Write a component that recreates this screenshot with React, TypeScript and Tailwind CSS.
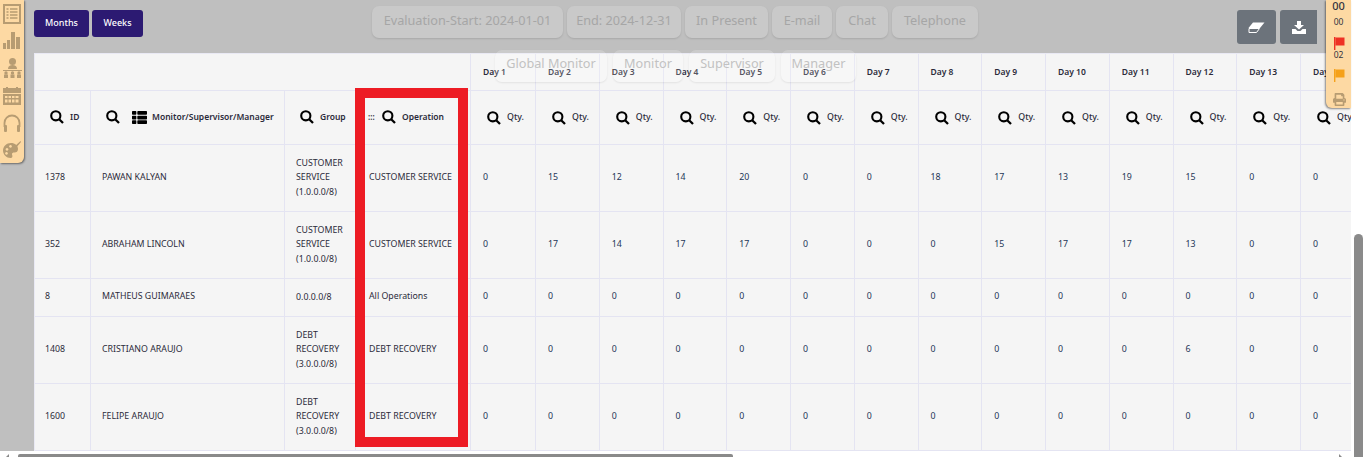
import { FaPrint, FaThList } from "react-icons/fa";

const rows = [
  { id: "1378", name: "PAWAN KALYAN", group: ["CUSTOMER", "SERVICE", "(1.0.0.0/8)"], op: "CUSTOMER SERVICE", q: [0, 15, 12, 14, 20, 0, 0, 18, 17, 13, 19, 15, 0, 0] },
  { id: "352", name: "ABRAHAM LINCOLN", group: ["CUSTOMER", "SERVICE", "(1.0.0.0/8)"], op: "CUSTOMER SERVICE", q: [0, 17, 14, 17, 17, 0, 0, 0, 15, 17, 17, 13, 0, 0] },
  { id: "8", name: "MATHEUS GUIMARAES", group: ["0.0.0.0/8"], op: "All Operations", q: [0, 0, 0, 0, 0, 0, 0, 0, 0, 0, 0, 0, 0, 0] },
  { id: "1408", name: "CRISTIANO ARAUJO", group: ["DEBT", "RECOVERY", "(3.0.0.0/8)"], op: "DEBT RECOVERY", q: [0, 0, 0, 0, 0, 0, 0, 0, 0, 0, 0, 6, 0, 0] },
  { id: "1600", name: "FELIPE ARAUJO", group: ["DEBT", "RECOVERY", "(3.0.0.0/8)"], op: "DEBT RECOVERY", q: [0, 0, 0, 0, 0, 0, 0, 0, 0, 0, 0, 0, 0, 0] },
];
const days = Array.from({ length: 14 }, (_, i) => i + 1);
const cell = "border-r border-b border-[#e4e4f2] flex items-center min-w-0";

function Search() {
  return (
    <svg width="14" height="14" viewBox="0 0 14 14" fill="none" stroke="#000" className="shrink-0">
      <circle cx="5.8" cy="5.8" r="4.6" strokeWidth="2.1" />
      <path d="M9.2 9.2 L13 13" strokeWidth="2.3" />
    </svg>
  );
}
function Flag({ color, className }: { color: string; className: string }) {
  return (
    <svg width="11" height="13" viewBox="0 0 11 13" className={className}>
      <rect x="0" y="0" width="1.4" height="13" fill={color} />
      <path d="M1.4 0.5 H10.5 V8.5 H1.4 Z" fill={color} />
    </svg>
  );
}
function Ghost({ label, w }: { label: string; w: string }) {
  return <div className={`${w} h-[32px] pb-[3px] flex items-center justify-center rounded-[7px] bg-[#c9c9c9] shadow-[0_1px_2px_rgba(0,0,0,0.12)] text-[12.7px] text-[#a6a6a6] whitespace-nowrap`}>{label}</div>;
}
function Ghost2({ label, w }: { label: string; w: string }) {
  return <div className={`${w} h-[32px] pb-[5px] flex items-center justify-center rounded-[7px] bg-white/20 shadow-[0_1px_2px_rgba(0,0,0,0.08)] text-[12.7px] text-[#c2c2c2] whitespace-nowrap`}>{label}</div>;
}

export default function App() {
  return (
    <div className="w-[1366px] h-[457px] overflow-hidden flex bg-white font-['Noto_Sans','Open_Sans',sans-serif] text-[#2b2b3a]">
      <div className="relative w-[1354px] flex flex-col shrink-0">
        <div className="h-[53px] w-[1351px] bg-[#bfbfbf] flex shrink-0 items-start pl-[34px]">
          <div className="flex gap-[3px] pt-[10px]">
            <button className="w-[55px] h-[27px] rounded-[3px] bg-[#2c1a72] text-white text-[9px] font-medium pb-[1px]">Months</button>
            <button className="w-[51px] h-[27px] rounded-[3px] bg-[#2c1a72] text-white text-[9px] font-medium pb-[1px]">Weeks</button>
          </div>
          <div className="flex gap-[4px] pt-[6px] ml-[229px]">
            <Ghost label="Evaluation-Start: 2024-01-01" w="w-[191px]" />
            <Ghost label="End: 2024-12-31" w="w-[114px]" />
            <Ghost label="In Present" w="w-[83px]" />
            <Ghost label="E-mail" w="w-[60px]" />
            <Ghost label="Chat" w="w-[52px]" />
            <Ghost label="Telephone" w="w-[86px]" />
          </div>
          <div className="flex gap-[4px] pt-[10px] ml-[259px]">
            <button className="w-[39px] h-[34px] rounded-[3px] bg-[#6c737b] flex items-center justify-center text-white">
              <svg width="17" height="11" viewBox="0 0 17 11" fill="none">
                <path d="M5 0.5 H16.5 L12 6 H0.5 Z" fill="#fff" />
                <path d="M1 6.5 H11.5 L8.5 10.5 H1 Z" stroke="#fff" strokeWidth="1" fill="none" />
              </svg>
            </button>
            <button className="w-[37px] h-[34px] rounded-l-[3px] bg-[#6c737b] flex items-center justify-center text-white">
              <svg width="14" height="13" viewBox="0 0 14 13" fill="#fff">
                <path d="M5 0 H9 V4 H12 L7 8.5 L2 4 H5 Z" />
                <path d="M0 8 H3.5 L5.5 10 H8.5 L10.5 8 H14 V13 H0 Z" />
              </svg>
            </button>
          </div>
        </div>

        <div className="flex h-[398px] shrink-0 w-[1351px]">
          <div className="w-[34px] bg-[#bfbfbf] shrink-0" />
          <div className="flex-1 overflow-hidden bg-[#f5f5f5] border-t border-l border-[#e9e9f4]">
            <div className="w-[1420px] grid grid-cols-[56px_194px_71px_115px_65px_repeat(12,63.75px)_64px] grid-rows-[37px_54px_67px_67px_38px_67px_67px] text-[8.8px]">
              <div className={`${cell} col-span-4`} />
              {days.map((d) => (
                <div key={d} className={`${cell} pl-[12px] font-semibold text-[8.5px]`}>Day {d}</div>
              ))}

              <div className={`${cell} pl-[15px] gap-[6px] font-semibold text-[8.5px] pb-[1px]`}><Search />ID</div>
              <div className={`${cell} pl-[15px] font-semibold text-[8.5px] whitespace-nowrap pb-[1px]`}>
                <Search />
                <FaThList size={15} className="text-black ml-[12px] mr-[5px] shrink-0" />
                Monitor/Supervisor/Manager
              </div>
              <div className={`${cell} pl-[15px] gap-[6px] font-semibold text-[8.5px] pb-[1px]`}><Search />Group</div>
              <div className={`${cell} pl-[12px] font-semibold text-[8.5px] pb-[1px]`}>
                <span className="w-[14px] text-[8px]">:::</span>
                <Search />
                <span className="ml-[6px]">Operation</span>
              </div>
              {days.map((d) => (
                <div key={d} className={`${cell} pl-[16px] gap-[6px] font-medium`}><Search />Qty.</div>
              ))}

              {rows.map((r) => (
                <div key={r.id} className="contents">
                  <div className={`${cell} pl-[10px] pb-[1px]`}>{r.id}</div>
                  <div className={`${cell} pl-[11px] pb-[1px]`}>{r.name}</div>
                  <div className={`${cell} pl-[11px] leading-[14.4px] pb-[1px]`}>
                    <div>{r.group.map((g) => <div key={g}>{g}</div>)}</div>
                  </div>
                  <div className={`${cell} pl-[13px] whitespace-nowrap pb-[1px]`}>{r.op}</div>
                  {r.q.map((v, i) => (
                    <div key={i} className={`${cell} pl-[12px] pb-[1px] text-[#1d3557]`}>{v}</div>
                  ))}
                </div>
              ))}
            </div>
          </div>
        </div>

        <div className="h-[6px] w-full bg-white flex items-end shrink-0 pl-[6px] pr-[11px]">
          <svg width="5" height="3" viewBox="0 0 5 3" fill="#8a8a8a" className="mb-0"><path d="M0 3 L3 0 V3 Z" /></svg>
          <div className="ml-[7px] w-[715px] h-[3px] rounded-t-[2px] bg-[#8a8a8a]" />
          <svg width="4" height="3" viewBox="0 0 4 3" fill="#8a8a8a" className="ml-auto"><path d="M0 0 L3 3 H0 Z" /></svg>
        </div>

        {/* floating overlays */}
        <div className="absolute left-[495px] top-[50px] flex gap-[6px]">
          <Ghost2 label="Global Monitor" w="w-[112px]" />
          <Ghost2 label="Monitor" w="w-[70px]" />
          <Ghost2 label="Supervisor" w="w-[86px]" />
          <Ghost2 label="Manager" w="w-[75px]" />
        </div>

        <div className="absolute left-[355px] top-[88px] w-[113px] h-[359px] border-[10px] border-[#ed1c24]" />

        <div className="absolute left-0 top-0 w-[24px] h-[163px] bg-[#fdd9a3] rounded-br-[6px] shadow-[1px_1px_2px_rgba(0,0,0,0.45)] flex flex-col items-center text-[#b79c72]">
          <svg width="18" height="20" viewBox="0 0 18 20" fill="none" stroke="currentColor" className="mt-[4px]">
            <rect x="1" y="1" width="16" height="18" strokeWidth="2" />
            <path d="M3.5 5 H5.5 M7 5 H14.5 M3.5 8 H5.5 M7 8 H14.5 M3.5 11 H5.5 M7 11 H14.5 M3.5 14 H5.5 M7 14 H14.5" strokeWidth="1.6" />
          </svg>
          <svg width="18" height="17" viewBox="0 0 18 17" fill="currentColor" className="mt-[8px]"><rect x="0" y="11" width="3" height="6" /><rect x="4" y="8" width="3" height="9" /><rect x="8" y="0" width="4" height="17" /><rect x="13" y="5" width="4" height="12" /></svg>
          <svg width="19" height="20" viewBox="0 0 19 20" fill="currentColor" className="mt-[9px]"><circle cx="9.5" cy="3.5" r="3.5" /><path d="M5 11c0-3 2-4 4.5-4S14 8 14 11z" /><rect x="0" y="12" width="19" height="1" /><circle cx="3" cy="15" r="1.7" /><circle cx="9.5" cy="15" r="1.7" /><circle cx="16" cy="15" r="1.7" /><rect x="1" y="16.5" width="4" height="3.5" /><rect x="7.5" y="16.5" width="4" height="3.5" /><rect x="14" y="16.5" width="4" height="3.5" /></svg>
          <svg width="18" height="18" viewBox="0 0 18 18" fill="currentColor" className="mt-[9px]">
            <rect x="0" y="1" width="18" height="5" />
            <rect x="3" y="0" width="2" height="3" /><rect x="13" y="0" width="2" height="3" />
            <path fillRule="evenodd" d="M0 7 H18 V18 H0 Z M2 9 V11 H4.5 V9 Z M5.5 9 V11 H8 V9 Z M9 9 V11 H11.5 V9 Z M12.5 9 V11 H15.5 V9 Z M2 12.5 V15.5 H4.5 V12.5 Z M5.5 12.5 V15.5 H8 V12.5 Z M9 12.5 V15.5 H11.5 V12.5 Z M12.5 12.5 V15.5 H15.5 V12.5 Z" />
          </svg>
          <svg width="18" height="18" viewBox="0 0 18 18" fill="none" stroke="currentColor" className="mt-[9px]">
            <path d="M1.5 13 V9 a7.5 7.5 0 0 1 15 0 V13" strokeWidth="1.8" />
            <rect x="1" y="11" width="3" height="7" rx="1" fill="currentColor" stroke="none" />
            <rect x="14" y="11" width="3" height="7" rx="1" fill="currentColor" stroke="none" />
          </svg>
          <svg width="18" height="17" viewBox="0 0 18 17" fill="currentColor" className="mt-[9px]">
            <path fillRule="evenodd" d="M8 2 C3.5 2 0 5.5 0 9.5 C0 13.5 3.5 17 7.5 17 C10 17 9.5 14.5 9 13.5 C8.7 12 10 11.5 11.5 11.5 C13.5 11.5 15 10.5 15 8 C15 4.5 12 2 8 2 Z M4 7 a1.4 1.4 0 1 0 0.01 0 Z M3.5 11 a1.4 1.4 0 1 0 0.01 0 Z M7.5 4 a1.4 1.4 0 1 0 0.01 0 Z" />
            <path d="M17.5 0 L18 1 L12 8 L10 8.5 L10.5 6.5 Z" />
          </svg>
        </div>

        <div className="absolute left-[1326px] top-0 w-[25px] h-[108px] bg-[#fdd9a3] rounded-bl-[6px] shadow-[-1px_1px_2px_rgba(0,0,0,0.45)] flex flex-col items-center text-[#33333f]">
          <span className="text-[11px] font-medium leading-[12px]">00</span>
          <span className="text-[8.5px] leading-[12px] mt-[4px]">00</span>
          <Flag color="#ee3124" className="mt-[9px] ml-[1px]" />
          <span className="text-[8.5px] leading-[12px] -mt-[1px]">02</span>
          <Flag color="#f5a11a" className="mt-[8px] ml-[1px]" />
          <FaPrint size={13} className="text-[#b79c72] mt-[11px] ml-[1px]" />
        </div>
      </div>
      <div className="w-[12px] h-full relative">
        <div className="mt-[234px] w-[9px] h-[223px] rounded-t-[5px] bg-[#8a8a8a]" />
      </div>
    </div>
  );
}
